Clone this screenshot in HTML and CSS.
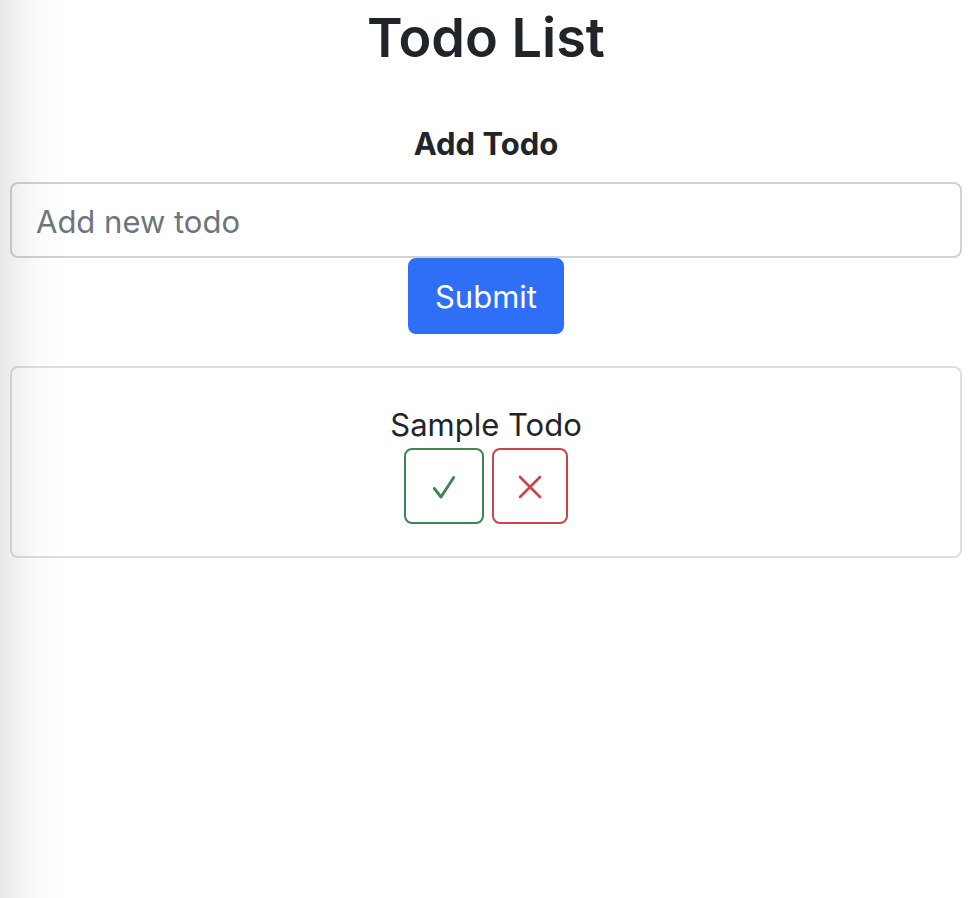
FILE: index.html
```html
<!DOCTYPE html>
<html lang="en">
<head>
<meta charset="utf-8">
<meta name="viewport" content="width=device-width, initial-scale=1">
<title>Todo List</title>
<link rel="stylesheet" href="styles.css">
</head>
<body>
<main class="app">
  <h1 class="title">Todo List</h1>
  <form class="form">
    <label class="form-label" for="todo">Add Todo</label>
    <input class="form-control" id="todo" type="text" placeholder="Add new todo">
    <button class="btn btn-primary" type="submit">Submit</button>
  </form>
  <section class="card">
    <span class="todo-text">Sample Todo</span>
    <div class="actions">
      <button class="btn btn-done" type="button" aria-label="Complete">
        <svg width="26" height="26" viewBox="0 0 26 26" fill="none" stroke="currentColor" stroke-width="2.900" stroke-linecap="round" stroke-linejoin="round"><path d="M3.300 14.500L10 23L22.700 3.500"/></svg>
      </button>
      <button class="btn btn-remove" type="button" aria-label="Remove">
        <svg width="22" height="26" viewBox="0 0 22 26" fill="none" stroke="currentColor" stroke-width="2.600" stroke-linecap="round" overflow="visible"><path d="M1 3L21 23M21 3L1 23"/></svg>
      </button>
    </div>
  </section>
</main>
</body>
</html>
```
FILE: styles.css
```css
* { box-sizing: border-box; }

body {
  margin: 0;
  min-height: 100vh;
  background: linear-gradient(to right, #e8e8e8, #f3f3f3 20px, #fbfbfb 40px, #fff 64px);
  color: #212529;
  font-family: Inter, sans-serif;
  font-size: 31px;
  line-height: 48px;
}

.app {
  padding: 0 12px 0 10px;
  text-align: center;
}

.title {
  margin: 0;
  padding-top: 4px;
  font-size: 54px;
  font-weight: 600;
  line-height: 68px;
}

.form {
  display: flex;
  flex-direction: column;
  align-items: center;
  margin: 48px 0 32px;
}

.form-label {
  margin-bottom: 14px;
  font-weight: 700;
}

.form-control {
  width: 100%;
  height: 76px;
  padding: 2px 24px 0;
  border: 2px solid #ced4da;
  border-color: rgb(0 20 30 / 19%);
  border-radius: 8px;
  background: transparent;
  color: inherit;
  font: inherit;
}

.form-control::placeholder {
  color: #6c757d;
  opacity: 1;
}

.btn {
  display: flex;
  align-items: center;
  justify-content: center;
  height: 76px;
  padding: 2px 25px 0;
  border: 2px solid;
  border-radius: 8px;
  background: transparent;
  font: inherit;
}

.btn-primary {
  border-color: #2f6ff6;
  background: #2f6ff6;
  color: #fff;
}

.card {
  padding: 34px 32px 32px;
  border: 2px solid rgb(0 0 0 / 13%);
  border-radius: 8px;
}

.actions {
  display: flex;
  justify-content: center;
  gap: 8px;
}

.todo-text {
  display: block;
  line-height: 46px;
}

.btn-done { color: #3d8557; }
.btn-remove { color: #cb444a; }
```
